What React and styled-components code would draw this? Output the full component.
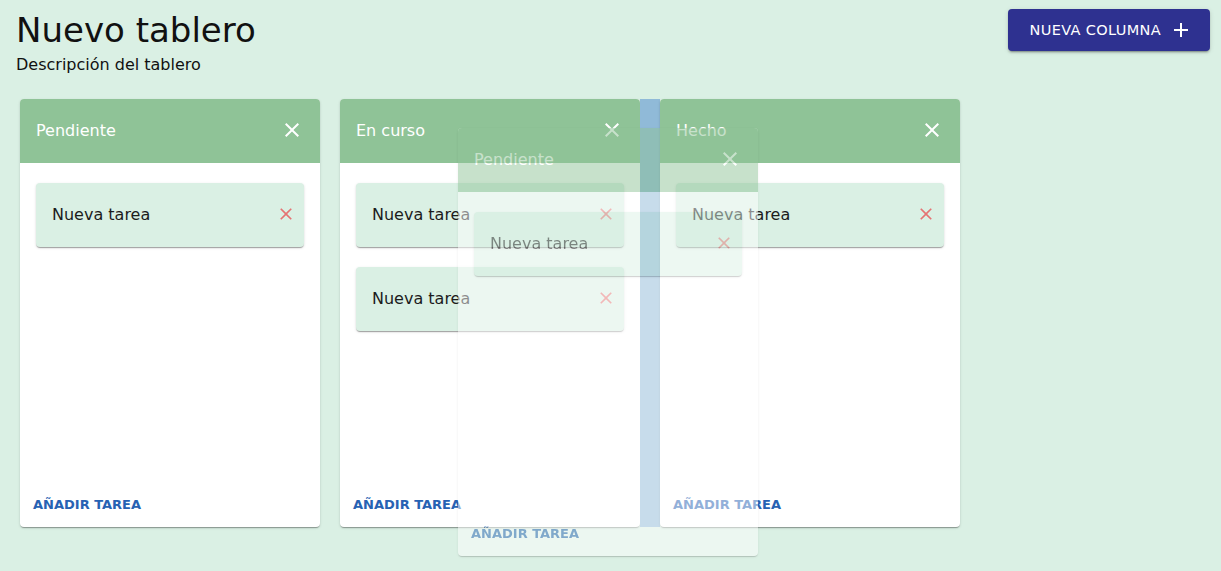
import React from "react";
import styled, { createGlobalStyle } from "styled-components";

const GlobalStyle = createGlobalStyle`
  html, body {
    margin: 0;
    padding: 0;
    background: #daf0e4;
    font-family: "DejaVu Sans", "Liberation Sans", sans-serif;
  }
  * { box-sizing: border-box; }
`;

const Page = styled.div`
  min-height: 571px;
  background: #daf0e4;
  padding: 9px 11px 0 16px;
`;

const TopBar = styled.header`
  display: flex;
  justify-content: space-between;
  align-items: flex-start;
`;

const TitleBlock = styled.div`
  display: flex;
  flex-direction: column;
`;

const Title = styled.h1`
  margin: 0;
  font-size: 34px;
  font-weight: 400;
  line-height: 42px;
  color: #111;
`;

const Subtitle = styled.p`
  margin: 2px 0 0;
  font-size: 16px;
  line-height: 24px;
  color: #111;
`;

const PrimaryButton = styled.button`
  display: inline-flex;
  align-items: center;
  gap: 8px;
  height: 42px;
  padding: 0 17px 0 22px;
  border: none;
  border-radius: 4px;
  background: #2e3190;
  color: #fff;
  font-family: inherit;
  font-size: 14.5px;
  letter-spacing: 0.35px;
  text-transform: uppercase;
  box-shadow: 0 3px 1px -2px rgba(0,0,0,0.2), 0 2px 2px 0 rgba(0,0,0,0.14), 0 1px 5px 0 rgba(0,0,0,0.12);
  cursor: pointer;
`;

const Board = styled.div`
  position: relative;
  display: flex;
  align-items: flex-start;
  margin-top: 22px;
  padding-left: 4px;
`;

const DropZone = styled.div`
  width: 20px;
  height: 428px;
  flex: none;
  background: ${(p) => (p.$active ? "#90bad8" : "transparent")};
`;

const ColumnBox = styled.section`
  width: 300px;
  height: 428px;
  flex: none;
  display: flex;
  flex-direction: column;
  background: #fff;
  border-radius: 4px;
  overflow: hidden;
  box-shadow: 0 2px 1px -1px rgba(0,0,0,0.2), 0 1px 1px 0 rgba(0,0,0,0.14), 0 1px 3px 0 rgba(0,0,0,0.12);
`;

const Ghost = styled.div`
  position: absolute;
  left: 442px;
  top: 29px;
  opacity: 0.5;
  pointer-events: none;
`;

const ColumnHeader = styled.div`
  height: 64px;
  flex: none;
  display: flex;
  align-items: center;
  justify-content: space-between;
  padding: 0 16px 2px;
  background: #8fc397;
  color: #fff;
  font-size: 16px;
`;

const IconSlot = styled.span`
  display: inline-flex;
  width: ${(p) => p.$size}px;
  height: ${(p) => p.$size}px;
  color: ${(p) => p.$color};
  svg { width: 100%; height: 100%; fill: currentColor; display: block; }
`;

const CardList = styled.div`
  flex: 1;
  display: flex;
  flex-direction: column;
  gap: 20px;
  padding: 20px 16px;
`;

const TaskCard = styled.div`
  height: 64px;
  flex: none;
  display: flex;
  align-items: center;
  justify-content: space-between;
  padding: 0 8px 2px 16px;
  background: #daf0e4;
  border-radius: 4px;
  color: #1c1c1c;
  font-size: 16px;
  box-shadow: 0 2px 1px -1px rgba(0,0,0,0.2), 0 1px 1px 0 rgba(0,0,0,0.14), 0 1px 3px 0 rgba(0,0,0,0.12);
`;

const ColumnFooter = styled.div`
  padding: 0 8px 6px;
`;

const AddTaskButton = styled.button`
  border: none;
  background: transparent;
  padding: 4px 5px;
  font-family: inherit;
  font-size: 13px;
  font-weight: 700;
  line-height: 1.75;
  color: #2762b3;
  text-transform: uppercase;
  cursor: pointer;
`;

const CloseIcon = () => (
  <svg viewBox="0 0 24 24">
    <path d="M19 6.41 17.59 5 12 10.59 6.41 5 5 6.41 10.59 12 5 17.59 6.41 19 12 13.41 17.59 19 19 17.59 13.41 12z" />
  </svg>
);

const AddIcon = () => (
  <svg viewBox="0 0 24 24">
    <path d="M19 13h-6v6h-2v-6H5v-2h6V5h2v6h6v2z" />
  </svg>
);

const Column = ({ title, tasks }) => (
  <ColumnBox>
    <ColumnHeader>
      <span>{title}</span>
      <IconSlot $size={24} $color="#fff"><CloseIcon /></IconSlot>
    </ColumnHeader>
    <CardList>
      {tasks.map((t, i) => (
        <TaskCard key={i}>
          <span>{t}</span>
          <IconSlot $size={20} $color="#e57373"><CloseIcon /></IconSlot>
        </TaskCard>
      ))}
    </CardList>
    <ColumnFooter>
      <AddTaskButton>Añadir tarea</AddTaskButton>
    </ColumnFooter>
  </ColumnBox>
);

export default function App() {
  return (
    <>
      <GlobalStyle />
      <Page>
        <TopBar>
          <TitleBlock>
            <Title>Nuevo tablero</Title>
            <Subtitle>Descripción del tablero</Subtitle>
          </TitleBlock>
          <PrimaryButton>
            Nueva columna
            <IconSlot $size={24} $color="#fff"><AddIcon /></IconSlot>
          </PrimaryButton>
        </TopBar>
        <Board>
          <Column title="Pendiente" tasks={["Nueva tarea"]} />
          <DropZone />
          <Column title="En curso" tasks={["Nueva tarea", "Nueva tarea"]} />
          <DropZone $active />
          <Column title="Hecho" tasks={["Nueva tarea"]} />
          <Ghost>
            <Column title="Pendiente" tasks={["Nueva tarea"]} />
          </Ghost>
        </Board>
      </Page>
    </>
  );
}
